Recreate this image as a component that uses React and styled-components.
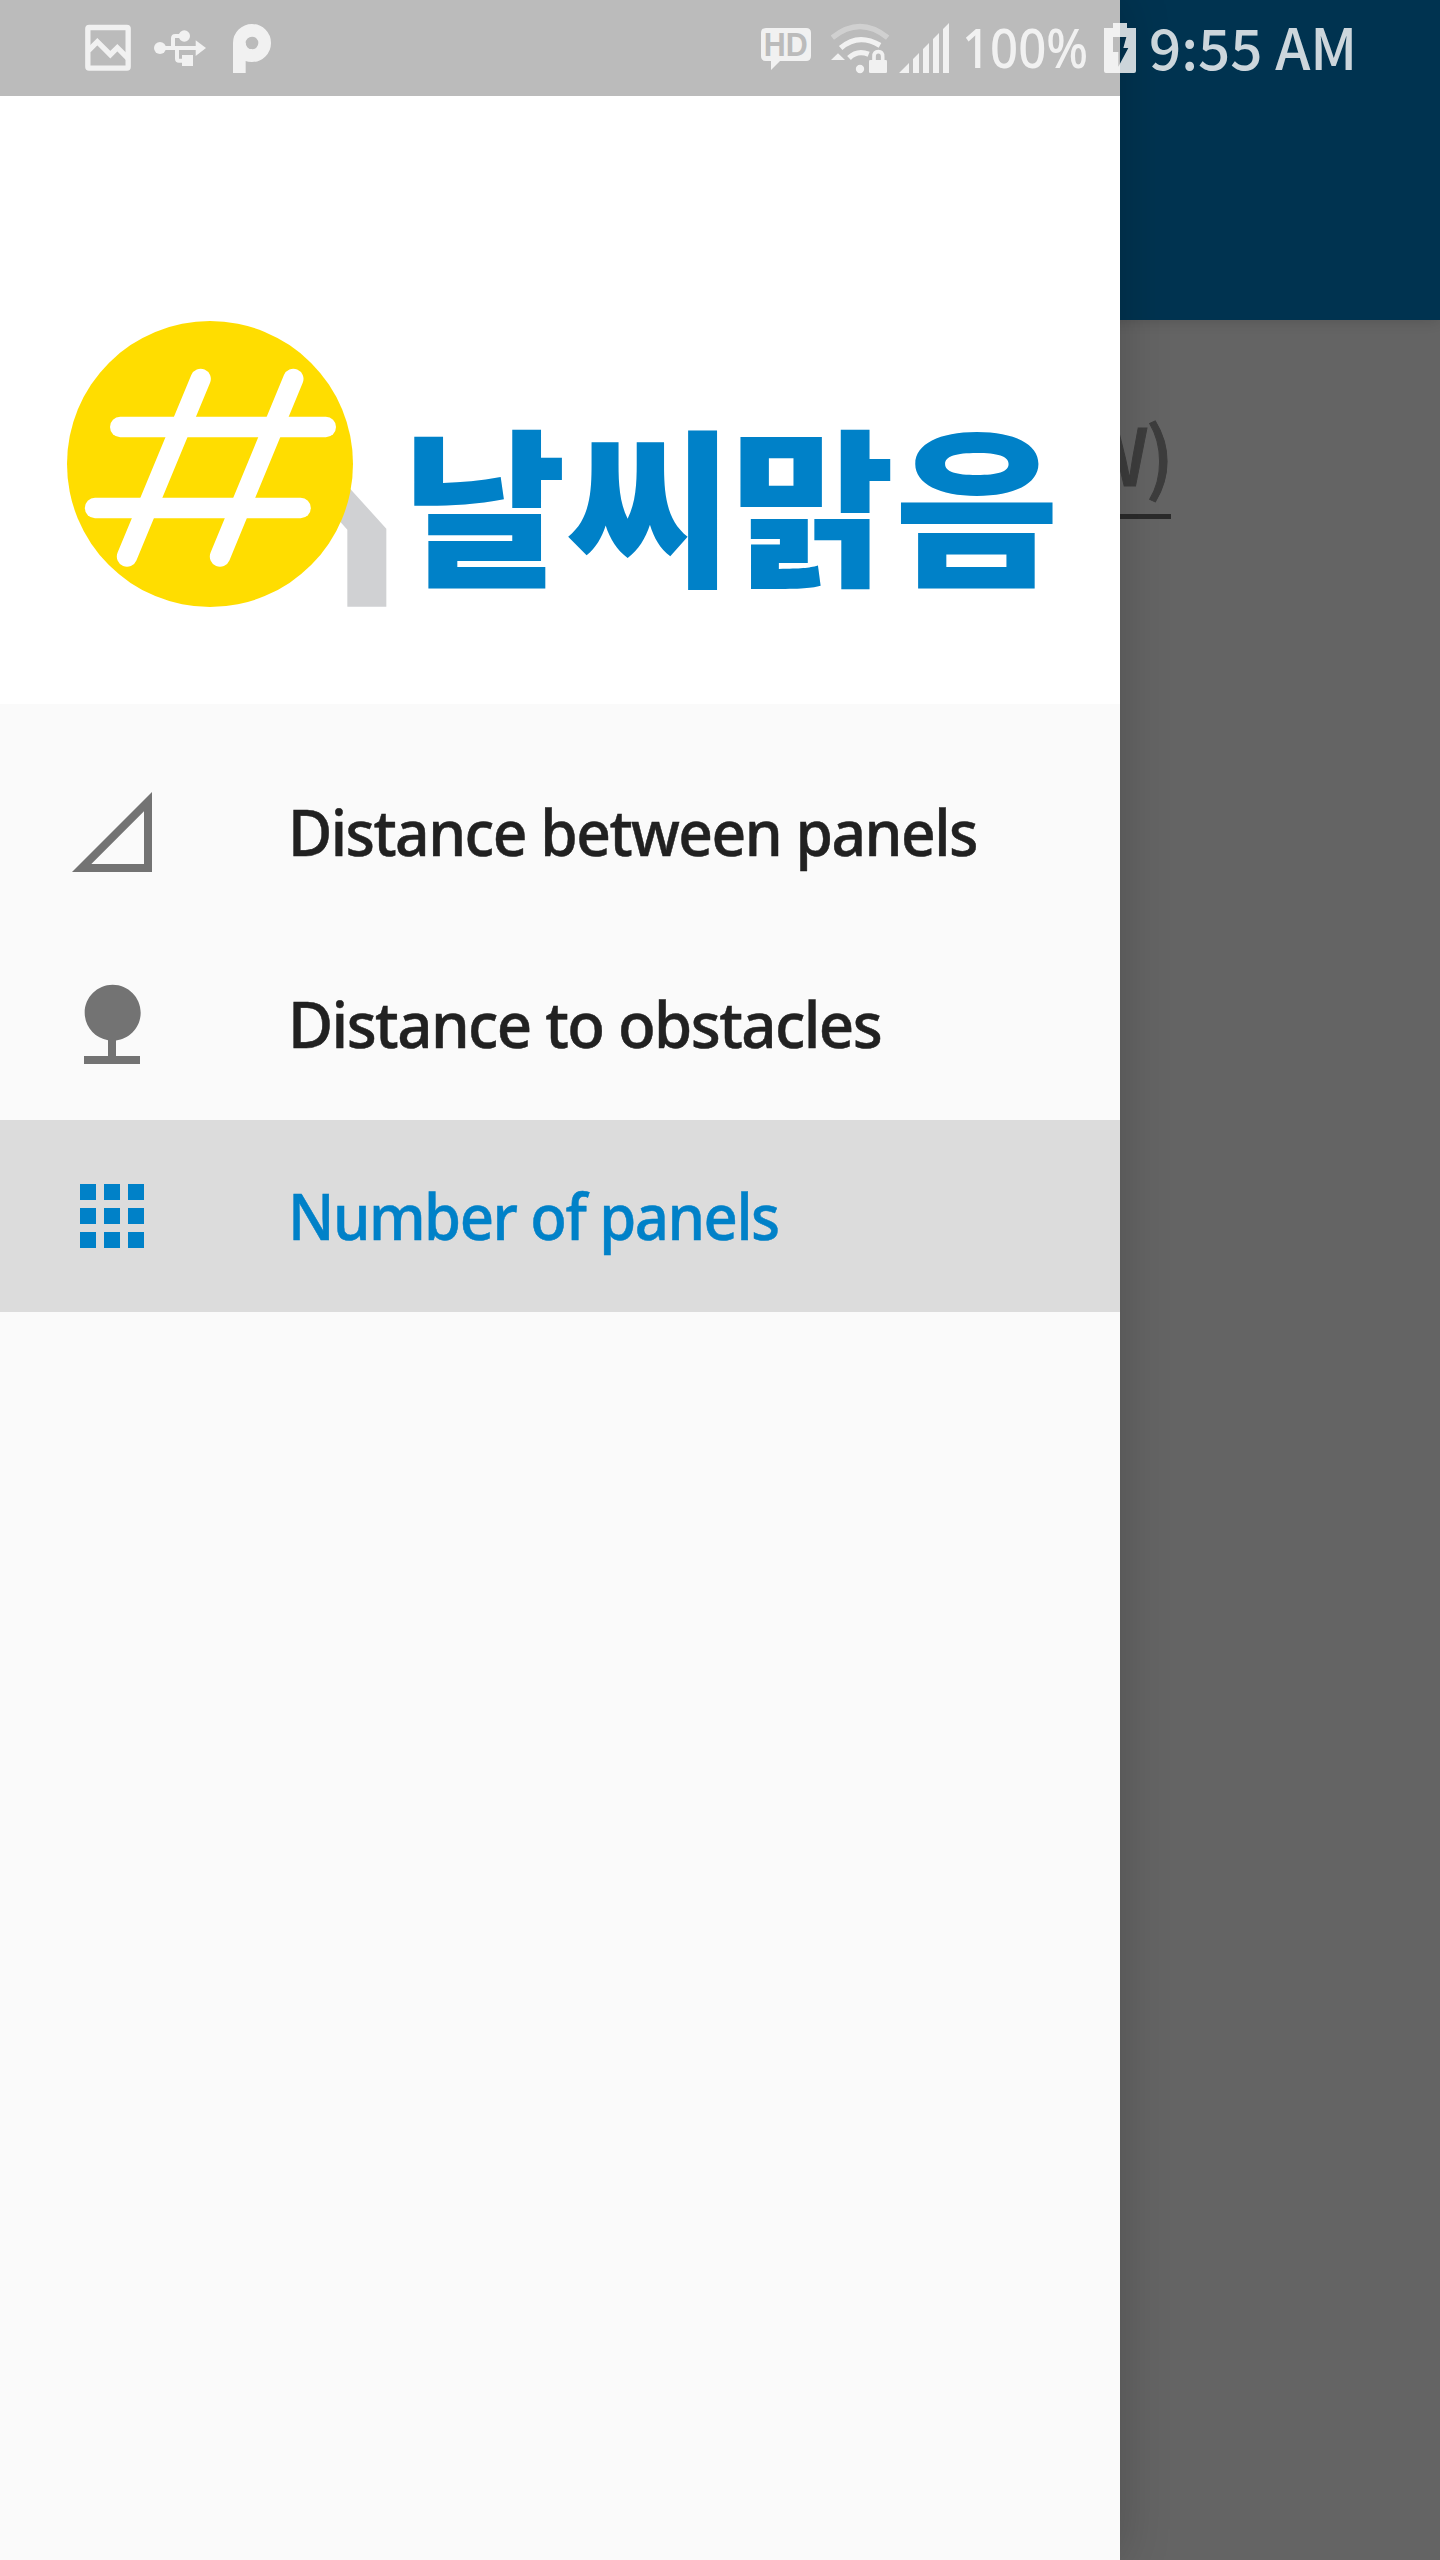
import { useState } from "react";
import styled, { createGlobalStyle } from "styled-components";

const items = [
  {
    id: "between",
    label: "Distance between panels",
    stretch: 0.961,
    icon: "M20 6.83V20H6.83L20 6.83M22 2L2 22h20V2z",
  },
  {
    id: "obstacles",
    label: "Distance to obstacles",
    stretch: 0.98,
    icon: "M13 16.12c3.47-.41 6.17-3.36 6.17-6.95 0-3.87-3.13-7-7-7s-7 3.13-7 7c0 3.47 2.52 6.34 5.83 6.89V20H5v2h14v-2h-6v-3.88z",
  },
  {
    id: "number",
    label: "Number of panels",
    stretch: 0.95,
    icon: "M4 8h4V4H4v4zm6 12h4v-4h-4v4zm-6 0h4v-4H4v4zm0-6h4v-4H4v4zm6 0h4v-4h-4v4zm6-10v4h4V4h-4zm-6 4h4V4h-4v4zm6 6h4v-4h-4v4zm0 6h4v-4h-4v4z",
  },
];

export default function App() {
  const [selected, setSelected] = useState("number");

  return (
    <Screen>
      <GlobalStyle />
      <Page>
        <AppBar />
        <Field>W)</Field>
      </Page>
      <Scrim />
      <Drawer>
        <StatusScrim />
        <DrawerHeader>
          <Logo />
          <Wordmark>날씨맑음</Wordmark>
        </DrawerHeader>
        <Menu>
          {items.map((item) => (
            <MenuItem
              key={item.id}
              $active={item.id === selected}
              onClick={() => setSelected(item.id)}
            >
              <MenuIcon viewBox="0 0 24 24">
                <path d={item.icon} />
              </MenuIcon>
              <Label $stretch={item.stretch}>{item.label}</Label>
            </MenuItem>
          ))}
        </Menu>
      </Drawer>
      <StatusBar />
    </Screen>
  );
}

function Logo() {
  return (
    <LogoSvg viewBox="81 63 960 858">
      <path fill="#d0d1d3" d="M880 511L1039 686V920H922V689L860 619z" />
      <circle cx="510" cy="492" r="429" fill="#ffdd00" />
      <g stroke="#fff" strokeWidth="61" strokeLinecap="round">
        <path d="M482 236.500L261 769.500" />
        <path d="M760 236.500L540 769.500" />
        <path d="M240.500 381H857.500" />
        <path d="M165 624H782" />
      </g>
    </LogoSvg>
  );
}

function StatusBar() {
  return (
    <StatusRow>
      <StatusGroup>
        <StatusIcon $width={46} viewBox="75 0 138 288">
          <rect x="83.500" y="82.500" width="121" height="122" rx="4" fill="none" stroke="#fff" strokeWidth="16" />
          <path fill="none" stroke="#fff" strokeWidth="16" d="M86 151L112 125L151 164L172 143L203 174" />
        </StatusIcon>
        <StatusIcon $width={52} $gap={23} viewBox="282 0 156 288">
          <circle cx="300" cy="144" r="18" />
          <circle cx="373" cy="108" r="17" />
          <path d="M407 121L438 144L407 168z" />
          <path d="M366 165h33v33h-33z" />
          <path fill="none" stroke="#fff" strokeWidth="12" d="M300 144H410M339 144V115Q339 108 346 108H365M351 144V176Q351 182 357 182H370" />
        </StatusIcon>
        <StatusIcon $width={38} $gap={27} viewBox="519 0 114 288">
          <circle cx="576" cy="129" r="38" fill="none" stroke="#fff" strokeWidth="38" />
          <rect x="519" y="129" width="38" height="90" />
          <rect x="550" y="147" width="26" height="20" />
        </StatusIcon>
      </StatusGroup>
      <StatusGroup>
        <StatusIcon $width={50} viewBox="63 0 150 288">
          <path d="M78 84H198Q213 84 213 99V168Q213 183 198 183H120L93 210V183H78Q63 183 63 168V99Q63 84 78 84z" />
          <HdText x="71" y="168" textLength="132" lengthAdjust="spacingAndGlyphs">HD</HdText>
        </StatusIcon>
        <StatusIcon $width={59} $gap={20} viewBox="273 0 177 288">
          <g fill="none" stroke="#fff" strokeWidth="16">
            <path opacity="0.400" d="M277 113Q360 46 443 113" />
            <path d="M302 144Q355 98 420 136" />
            <path d="M327 174Q352 149 386 163" />
            <path strokeWidth="11" d="M402 184V170Q402 155 415 155Q428 155 428 170V184" />
          </g>
          <path d="M273 180L294 160L315 180z" />
          <circle cx="360" cy="207" r="12.500" />
          <rect x="387" y="180" width="54" height="39" rx="4" />
        </StatusIcon>
        <StatusIcon $width={50} $gap={9} viewBox="477 0 150 288">
          <path d="M477 219L507 189V219zM519 219V177L537 159V219zM549 219V147L567 129V219zM579 219V117L597 99V219zM609 219V87L627 69V219z" />
        </StatusIcon>
        <BatteryText>100%</BatteryText>
        <StatusIcon $width={32} viewBox="72 0 96 288">
          <path
            fillRule="evenodd"
            d="M99 84V69H141V84H168V213Q168 219 162 219H78Q72 219 72 213V84zM99 111V156H115V200L145 144H130L139 111z"
          />
        </StatusIcon>
        <Clock>9:55 AM</Clock>
      </StatusGroup>
    </StatusRow>
  );
}

const GlobalStyle = createGlobalStyle`
  body {
    margin: 0;
    background: #fafafa;
    font-family: "Noto Sans", "Noto Sans CJK KR", sans-serif;
  }
`;

const Screen = styled.div`
  display: grid;
  grid-template: 2560px / 1440px;
  width: 1440px;
  height: 2560px;
  overflow: hidden;

  > * {
    grid-area: 1 / 1;
  }
`;

const Page = styled.div`
  background: #fafafa;
`;

const AppBar = styled.header`
  height: 320px;
  background: #0081c8;
  box-shadow: 0 2px 14px rgba(0, 0, 0, 0.14);
`;

const Field = styled.div`
  width: 1107px;
  margin: 82px 0 0 64px;
  padding-bottom: 12px;
  border-bottom: 5px solid #6b6b6b;
  color: #999;
  font-family: "Noto Sans CJK KR", sans-serif;
  font-size: 79px;
  font-weight: 500;
  letter-spacing: -3px;
  line-height: 100px;
  text-align: right;
  -webkit-text-stroke: 1px;
`;

const Scrim = styled.div`
  background: rgba(0, 0, 0, 0.6);
`;

const Drawer = styled.aside`
  display: flex;
  flex-direction: column;
  width: 1120px;
  background: #fafafa;
  box-shadow: 0 0 48px rgba(0, 0, 0, 0.2);
`;

const StatusScrim = styled.div`
  height: 96px;
  background: #bbb;
`;

const DrawerHeader = styled.div`
  display: flex;
  align-items: flex-end;
  box-sizing: border-box;
  height: 608px;
  padding: 0 0 97px 67px;
  background: #fff;
`;

const LogoSvg = styled.svg`
  flex: none;
  width: 320px;
  height: 286px;
`;

const Wordmark = styled.div`
  margin: 0 0 22px 15px;
  color: #0081c8;
  font-family: "Noto Sans CJK KR", sans-serif;
  font-size: 170px;
  font-weight: 900;
  line-height: 170px;
  white-space: nowrap;
  transform: scaleX(1.05);
  transform-origin: left;
`;

const Menu = styled.nav`
  padding-top: 32px;
`;

const MenuItem = styled.div`
  display: flex;
  align-items: center;
  gap: 128px;
  height: 192px;
  padding-left: 64px;
  background: ${(props) => (props.$active ? "#dcdcdc" : "transparent")};
  color: ${(props) => (props.$active ? "#0081c8" : "#212121")};
  fill: ${(props) => (props.$active ? "#0081c8" : "#737373")};
`;

const MenuIcon = styled.svg`
  width: 96px;
  height: 96px;
`;

const Label = styled.span`
  padding-bottom: 2px;
  font-size: 63px;
  font-weight: 500;
  letter-spacing: -1.600px;
  white-space: nowrap;
  -webkit-text-stroke: 0.5px;
  transform: scaleX(${(props) => props.$stretch});
  transform-origin: left;
`;

const StatusRow = styled.div`
  display: flex;
  justify-content: space-between;
  height: 96px;
  padding: 0 83px 0 85px;
  box-sizing: border-box;
  color: #fff;
  opacity: 0.8;
  z-index: 1;
`;

const StatusGroup = styled.div`
  display: flex;
  align-items: center;
`;

const StatusIcon = styled.svg`
  flex: none;
  width: ${(props) => props.$width}px;
  height: 96px;
  margin-left: ${(props) => props.$gap || 0}px;
  fill: #fff;
`;

const HdText = styled.text`
  fill: #bbb;
  font-family: "Liberation Sans", sans-serif;
  font-size: 97px;
  font-weight: 700;
`;

const BatteryText = styled.span`
  width: 142px;
  margin-left: 13px;
  padding-bottom: 2px;
  font-size: 54px;
  font-weight: 500;
  line-height: 60px;
  white-space: nowrap;
  transform: scaleX(0.91);
  transform-origin: left;
`;

const Clock = styled.span`
  width: 208px;
  margin-left: 13px;
  padding-bottom: 6px;
  font-family: "Noto Sans CJK KR", sans-serif;
  font-size: 56.5px;
  font-weight: 500;
  line-height: 60px;
  white-space: nowrap;
`;
